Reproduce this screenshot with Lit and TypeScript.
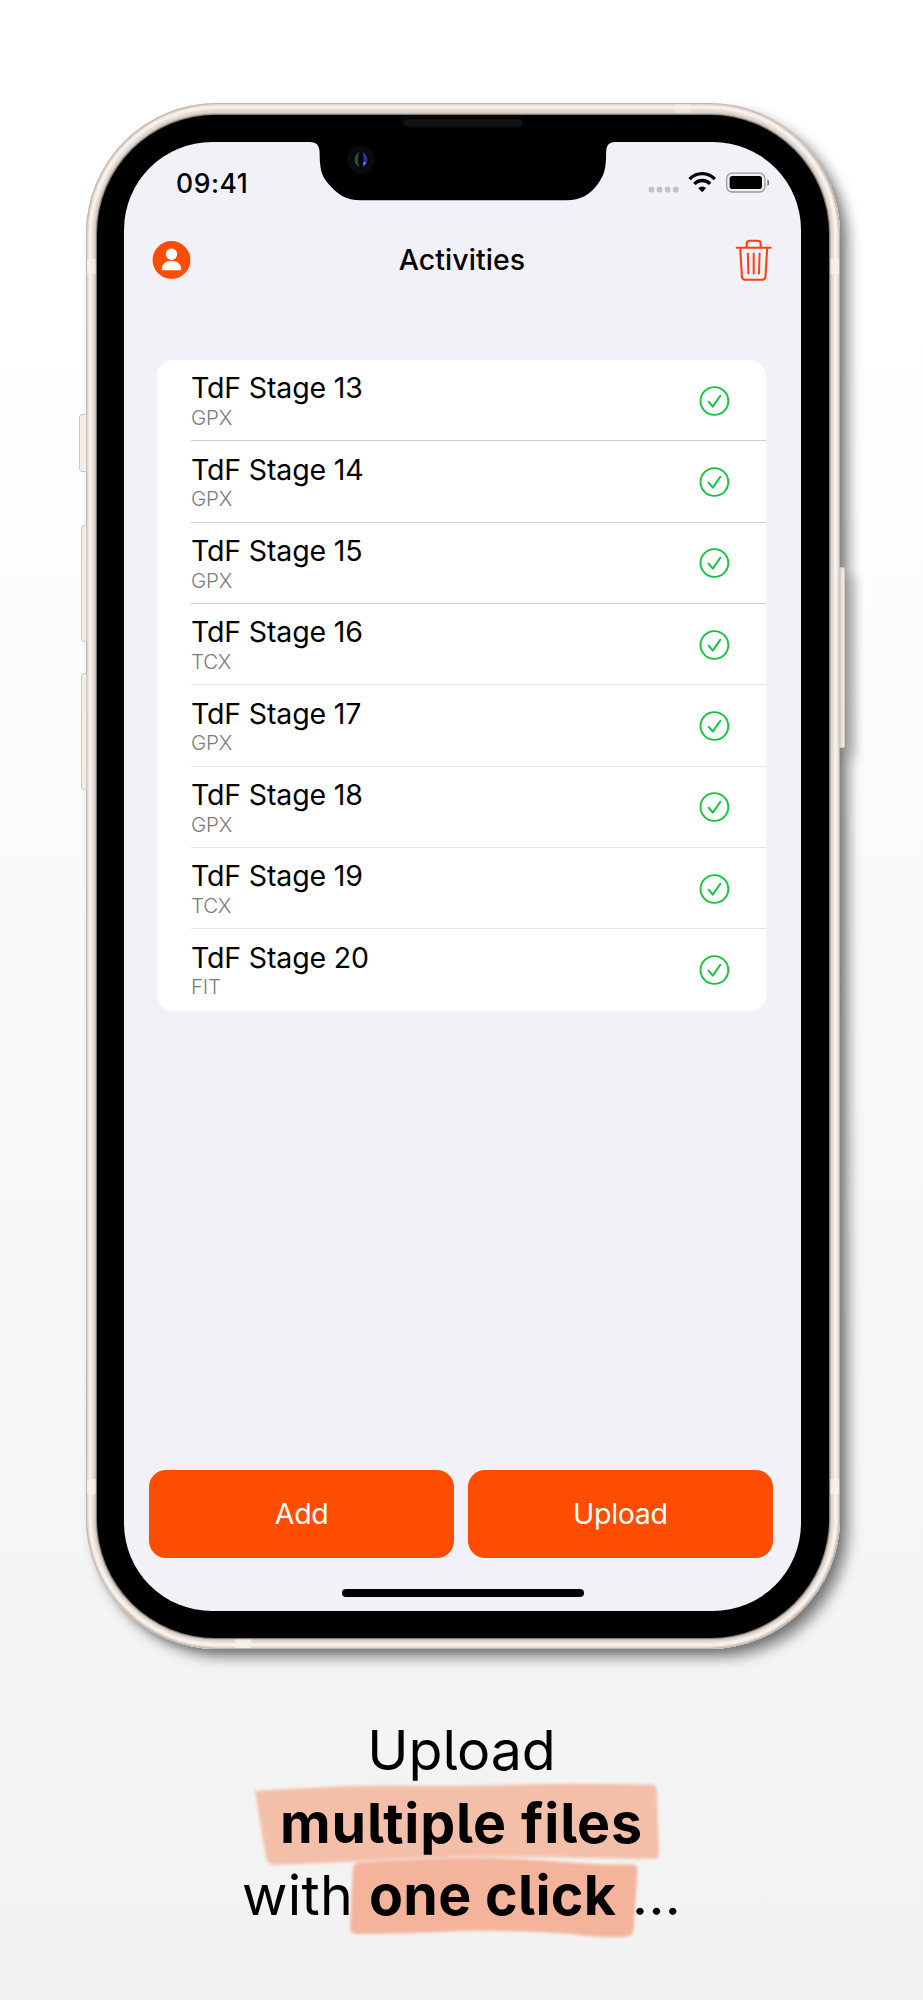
import { LitElement, html, css, svg } from "lit";
import { customElement, property } from "lit/decorators.js";

interface Activity {
  name: string;
  format: string;
}

const ACTIVITIES: Activity[] = [
  { name: "TdF Stage 13", format: "GPX" },
  { name: "TdF Stage 14", format: "GPX" },
  { name: "TdF Stage 15", format: "GPX" },
  { name: "TdF Stage 16", format: "TCX" },
  { name: "TdF Stage 17", format: "GPX" },
  { name: "TdF Stage 18", format: "GPX" },
  { name: "TdF Stage 19", format: "TCX" },
  { name: "TdF Stage 20", format: "FIT" },
];

@customElement("status-bar")
export class StatusBar extends LitElement {
  static styles = css`
    :host {
      display: flex;
      justify-content: space-between;
      align-items: flex-start;
      height: 84px;
      padding: 0 30px 0 52px;
    }
    .time {
      margin-top: 24px;
      font-size: 26.5px;
      line-height: 34px;
      font-weight: 500;
      letter-spacing: 0.55px;
    }
    .icons {
      display: block;
      width: 124px;
      height: 24px;
      margin-top: 28px;
    }
  `;
  render() {
    return html`
      <span class="time">09:41</span>
      <svg class="icons" viewBox="0 0 124 24">
        ${[0, 8.1, 16.3, 24.4].map(
          (x) => svg`<rect x=${1.6 + x} y="16.8" width="5.6" height="5.6" rx="1.8" fill="#c2c1c6"/>`
        )}
        <g fill="none" stroke="#000" stroke-width="3.4">
          <path d="M42.6 9.2a17 17 0 0 1 25.2 0" />
          <path d="M47.3 13.9a10.8 10.8 0 0 1 15.8 0" />
        </g>
        <path d="M55.2 22.2l-4-4.1a5.8 5.8 0 0 1 8 0z" />
        <rect x="79.7" y="3.2" width="38.2" height="18.8" rx="5.4" fill="none" stroke="#98979c" stroke-width="1.3" />
        <rect x="82.6" y="6.1" width="32.4" height="13" rx="2.8" />
        <path d="M120.4 9.2c2.4 1.2 2.4 5.6 0 6.8z" fill="#77767b" />
      </svg>
    `;
  }
}

@customElement("activity-row")
export class ActivityRow extends LitElement {
  @property() name = "";
  @property() format = "";
  static styles = css`
    :host {
      display: flex;
      align-items: center;
      justify-content: space-between;
      box-sizing: border-box;
      height: 81.33px;
      padding: 0 36px 0 34.5px;
    }
    .name {
      margin-top: 1px;
      font-size: 28.5px;
      line-height: 34px;
      font-weight: 400;
      letter-spacing: -0.15px;
    }
    .format {
      margin-top: -0.5px;
      font-size: 20.5px;
      line-height: 26px;
      font-weight: 300;
      color: #7c7c80;
      letter-spacing: -0.2px;
    }
    .check {
      display: block;
      width: 32px;
      height: 32px;
    }
  `;
  render() {
    return html`
      <div>
        <div class="name">${this.name}</div>
        <div class="format">${this.format}</div>
      </div>
      <svg class="check" viewBox="0 0 32 32" fill="none" stroke="#14c340" stroke-linecap="round" stroke-linejoin="round">
        <circle cx="16.4" cy="16" r="13.9" stroke-width="1.9" />
        <path d="M10.600 16.7L14.8 21.6L22.3 10.7" stroke-width="2" />
      </svg>
    `;
  }
}

@customElement("phone-notch")
export class PhoneNotch extends LitElement {
  static styles = css`
    :host {
      display: block;
    }
    .notch {
      display: block;
      width: 310px;
      height: 90px;
    }
  `;
  render() {
    return html`
      <svg class="notch" viewBox="308 112 310 90">
        <path d="M308 141.9h2c6.500 0 9.400 3.400 9.600 10c.2 17 1.600 24 9 32c8.500 10 17 16.400 32.400 16.400H565.800c15.400 0 25-6.500 32-16.400c6.600-9 8.200-15 8.400-32c.2-6.600 2.500-10 9-10h2.800V137H308z" />
        <rect x="400.500" y="115" width="125" height="13.500" rx="6" fill="#060606" />
        <rect x="404" y="119.500" width="118" height="6.500" rx="3.200" fill="#141414" />
        <circle cx="360.700" cy="159.700" r="13.800" fill="#0b0b0d" />
        <circle cx="360.700" cy="159.700" r="8" fill="#050609" />
        <path d="M357.800 154.300a7 7 0 0 0 0 10.800q-1.600-5.400 0-10.800z" fill="#2c6a68" stroke="#204e52" stroke-width="1.800" />
        <path d="M364 154.300a7 7 0 0 1 0 10.800q1.400-5.400 0-10.800z" fill="#4463d0" stroke="#26379a" stroke-width="2" />
        <circle cx="364.400" cy="163.400" r="1.300" fill="#8d78c4" />
      </svg>
    `;
  }
}

@customElement("app-root")
export class AppRoot extends LitElement {
  static styles = css`
    :host {
      display: block;
      font-family: Inter, "Liberation Sans", sans-serif;
      color: #000;
    }
    .page {
      box-sizing: border-box;
      width: 923px;
      height: 2000px;
      overflow: hidden;
      padding: 103px 0 0 85.5px;
      background: linear-gradient(#fff 0, #fff 320px, #fafafa 880px, #f2f2f2 2000px);
    }
    .phone {
      position: relative;
      box-sizing: border-box;
      width: 754px;
      height: 1546px;
      padding: 12px 11px 11px;
      border-radius: 131px;
      background: #d9d0c8;
      box-shadow: inset 0 0 1px 1px #b9b3ab, inset 0 0 1px 2.5px #e0d8d0, inset 0 0 1px 6px #f8f0ea,
        inset 0 0 2px 8.5px #e6ddd5, 9px 9px 13px rgba(0, 0, 0, 0.43), 3px 4px 5px rgba(0, 0, 0, 0.12);
    }
    .key {
      position: absolute;
      box-sizing: border-box;
      border: 1px solid #cfc8c0;
      border-radius: 3px 0 0 3px;
      background: #f3ede7;
    }
    .mute { left: -6.500px; top: 311px; width: 8px; height: 58px; }
    .vol-up { left: -5px; top: 422px; width: 6px; height: 117px; }
    .vol-down { left: -5px; top: 570px; width: 6px; height: 117px; }
    .power {
      right: -5.500px;
      top: 464px;
      width: 6.500px;
      height: 181px;
      border-radius: 0 2px 2px 0;
      background: linear-gradient(90deg, #d6cdc5, #f8f1eb);
      box-shadow: 9px 9px 12px rgba(0, 0, 0, 0.3);
    }
    .band {
      position: absolute;
      background: #f5f2ed;
      opacity: 0.8;
    }
    .b1 { left: 1px; top: 156px; width: 9px; height: 15px; }
    .b2 { right: 1px; top: 156px; width: 9px; height: 15px; }
    .b3 { left: 1px; bottom: 155px; width: 9px; height: 15px; }
    .b4 { right: 1px; bottom: 155px; width: 9px; height: 15px; }
    .b5 { left: 149px; bottom: 1px; width: 16px; height: 9px; }
    .b6 { right: 149px; top: 1px; width: 16px; height: 9px; opacity: 0.4; }
    .bezel {
      position: relative;
      box-sizing: border-box;
      height: 1523px;
      padding: 27px 27.500px;
      border-radius: 119px;
      background: #000;
      box-shadow: 0 0 1.500px 0.500px #6b655e;
    }
    .screen {
      display: flex;
      flex-direction: column;
      box-sizing: border-box;
      height: 1469px;
      border-radius: 88px;
      overflow: hidden;
      background: #f2f1f7;
    }
    .notch {
      position: absolute;
      left: 211.500px;
      top: -3px;
    }
    .nav {
      display: grid;
      grid-template-columns: 44px 1fr 44px;
      align-items: center;
      height: 68px;
      padding: 0 26px 0 25px;
    }
    .nav h1 {
      margin: 0;
      text-align: center;
      font-size: 28.500px;
      line-height: 34px;
      font-weight: 500;
      letter-spacing: 0.05px;
    }
    .user { display: block; width: 44px; height: 44px; }
    .trash { display: block; width: 44px; height: 48px; }
    .list {
      margin: 66px 35.500px 0 32.500px;
      border-radius: 16px;
      background: #fff;
      overflow: hidden;
    }
    .rule {
      height: 1px;
      margin: -1px 0 0 34.500px;
      background: #d0d0d3;
    }
    .light { background: #e6e6e9; }
    .actions {
      display: flex;
      gap: 13.500px;
      margin: auto 28px 0 25px;
    }
    .action {
      flex: 1;
      height: 87.500px;
      padding: 0;
      border: 0;
      border-radius: 17px;
      background: #ff4d00;
      color: #fff;
      font: 400 28.500px/87px Inter, "Liberation Sans", sans-serif;
      letter-spacing: -0.3px;
    }
    .home {
      width: 242px;
      height: 8.500px;
      margin: 31px auto 14px;
      border-radius: 5px;
      background: #000;
    }
    .caption {
      position: relative;
      margin: 65px 85.500px 0 0;
      font-size: 55.500px;
      line-height: 72.500px;
      text-align: center;
      font-feature-settings: "cv05";
    }
    .marker {
      position: absolute;
      left: 160px;
      top: 64px;
      width: 430px;
      height: 170px;
    }
    .line { position: relative; white-space: pre; }
    .line b { font-weight: 700; }
    .l2 { letter-spacing: 0.850px; }
    .l3 { letter-spacing: 0.300px; }
  `;

  render() {
    return html`
      <main class="page">
        <section class="phone">
          <i class="key mute"></i><i class="key vol-up"></i><i class="key vol-down"></i><i class="key power"></i>
          <i class="band b1"></i><i class="band b2"></i><i class="band b3"></i>
          <i class="band b4"></i><i class="band b5"></i><i class="band b6"></i>
          <div class="bezel">
            <div class="screen">
              <status-bar></status-bar>
              <header class="nav">
                <svg class="user" viewBox="0 0 44 44">
                  <circle cx="22.500" cy="22" r="18.900" fill="#ff4d00" />
                  <circle cx="22.500" cy="16.200" r="5.700" fill="#fff" />
                  <path d="M12.700 31.400c0-5.400 4.400-8.700 9.800-8.700s9.800 3.300 9.800 8.700q0 .8-.9.8H13.600q-.9 0-.9-.8z" fill="#fff" />
                </svg>
                <h1>Activities</h1>
                <svg class="trash" viewBox="0 0 44 48" fill="none" stroke="#ff4013" stroke-width="2.100" stroke-linecap="round" stroke-linejoin="round">
                  <path d="M5.700 11.800H39.700M15.700 11.600V8q0-3.200 3.200-3.200h7.600q3.200 0 3.200 3.200V11.600M9.200 12L10.900 40.300q.2 3.500 3.500 3.500H31q3.300 0 3.500-3.500L36.200 12" />
                  <path d="M16.800 17.500L17.400 37.500M22.700 17.500V37.500M28.600 17.500L28 37.500" stroke-width="2" />
                </svg>
              </header>
              <div class="list">
                ${ACTIVITIES.map(
                  (a, i) => html`
                    ${i ? html`<div class="rule ${i > 3 ? "light" : ""}"></div>` : ""}
                    <activity-row .name=${a.name} .format=${a.format}></activity-row>
                  `
                )}
              </div>
              <div class="actions">
                <button class="action">Add</button>
                <button class="action">Upload</button>
              </div>
              <div class="home"></div>
            </div>
            <phone-notch class="notch"></phone-notch>
          </div>
        </section>
        <section class="caption">
          <svg class="marker" viewBox="245 1778 430 170">
            <defs>
              <filter id="soft" x="-5%" y="-10%" width="110%" height="120%"><feGaussianBlur stdDeviation="1.800" /></filter>
            </defs>
            <g filter="url(#soft)">
              <path fill="#f4bfa9" d="M254 1791Q330 1786 380 1785.500Q480 1786 520 1784.500T650 1784.500Q656 1785 656 1792L658 1852Q658 1860 651 1859L560 1857.500Q440 1855 345 1862L274 1865Q267 1865 265 1858Z" />
              <path fill="#f4b49c" d="M352 1866Q354 1862 362 1862Q480 1854 560 1862Q600 1865 632 1864.500Q637 1865 636.500 1872L632.500 1930Q632 1936 624 1937Q600 1938 570 1934Q520 1930 460 1931Q400 1934 356 1934Q349 1934 349 1928Z" />
            </g>
          </svg>
          <div class="line">Upload</div>
          <div class="line l2"><b>multiple files</b></div>
          <div class="line l3">with <b>one click</b> ...</div>
        </section>
      </main>
    `;
  }
}
